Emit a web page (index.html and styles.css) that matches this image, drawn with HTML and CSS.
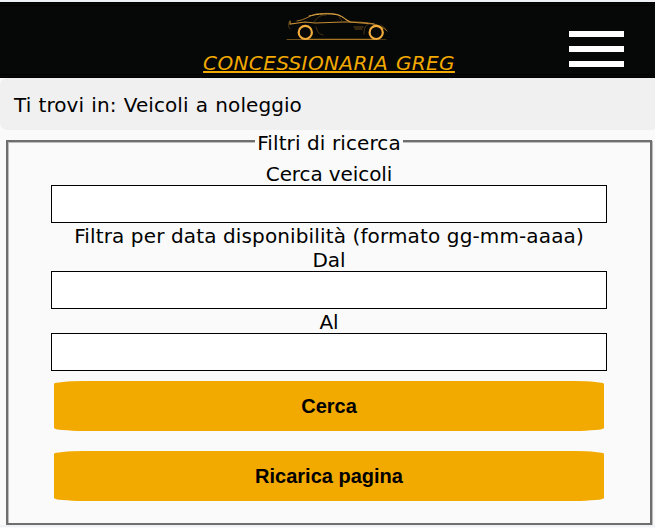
FILE: index.html
```html
<!DOCTYPE html>
<html lang="it">
<head>
<meta charset="utf-8">
<title>Concessionaria Greg</title>
<link rel="stylesheet" href="styles.css">
</head>
<body>
<header class="header">
  <div class="brand">
    <svg class="logo" viewBox="0 0 110 34" fill="none" stroke-linecap="round">
      <path d="M2 30.5H50" stroke="#715019" stroke-width="1"/>
      <path d="M20 30.4H92" stroke="#a87622" stroke-width="1.2"/>
      <path d="M90 30.5H101" stroke="#49350f" stroke-width="1"/>
      <path d="M12 12c8-1 12-5 19-7 10-1 20-1 25 2 4 2 5 4 10 6 12 0 24 1 30 5 3 1 5 3 6 4" stroke="#a97729" stroke-width="1"/>
      <path d="M24 7c7-2 22-3 29-1 6 2 7 5 12 7" stroke="#dda446" stroke-width="1"/>
      <path d="M5 12v3l15-2 10 1 28-1 6 0 25 2" stroke="#c48b34" stroke-width="1.2"/>
      <path d="M29 13c3-5 7-7 12-7M57 12l-3-4M4 13c-1 3-1 5 1 7M31 18c2 6 3 7 7 8M79 25c0-7 2-9 5-10M96 16l5 4" stroke="#644719" stroke-width=".7"/>
      <path d="M70 20h7m-8-2h9" stroke="#805a20" stroke-width=".8"/>
      <circle cx="20.3" cy="23.4" r="6.6" stroke="#f1ac3c" stroke-width="2.2"/>
      <circle cx="91.2" cy="23.4" r="6.6" stroke="#f1ac3c" stroke-width="2.2"/>
    </svg>
    <a class="name">CONCESSIONARIA GREG</a>
  </div>
  <div class="menu"><span></span><span></span><span></span></div>
</header>
<nav class="crumbs"><span class="crumb-text">Ti trovi in: Veicoli a noleggio</span></nav>
<form>
  <fieldset class="filters">
    <legend><span class="legend-text">Filtri di ricerca</span></legend>
    <label class="first" for="q">Cerca veicoli</label>
    <input id="q" type="text">
    <p>Filtra per data disponibilità (formato gg-mm-aaaa)</p>
    <label for="from">Dal</label>
    <input id="from" type="text">
    <label for="to">Al</label>
    <input id="to" type="text">
    <button type="button">Cerca</button>
    <button type="button">Ricarica pagina</button>
  </fieldset>
</form>
</body>
</html>
```
FILE: styles.css
```css
* { box-sizing: border-box; }
html { overflow: hidden; }
body {
  margin: 0;
  padding-top: 2px;
  background: linear-gradient(#eef2f5 2px, #fafafa 2px);
  color: #000;
  font: 20px/24px Verdana, "DejaVu Sans", sans-serif;
}
.header {
  position: relative;
  height: 76px;
  background: #060807;
  border-block: 4px double #000;
}
.brand {
  display: flex;
  flex-direction: column;
  align-items: center;
  padding-left: 3px;
}
.logo { width: 110px; height: 34px; margin: 3px 0 0 21px; flex: none; }
.name {
  margin-top: 8px;
  color: #f2a900;
  font-style: italic;
  letter-spacing: .37px;
  word-spacing: 1.2px;
  text-decoration: underline;
  text-decoration-thickness: 2px;
  text-underline-offset: 1px;
  white-space: nowrap;
}
.menu {
  position: absolute;
  top: 25px;
  right: 31px;
  width: 55px;
  display: grid;
  gap: 9px;
}
.menu span { height: 6px; background: #fff; }
.crumbs {
  height: 52px;
  padding: 15px 14px;
  border-radius: 7px 0 3px 7px;
  background: #f0f0f0;
  letter-spacing: .07px;
  word-spacing: .8px;
}
.filters {
  width: 645px;
  height: 395px;
  margin: 0 0 0 6px;
  padding: 9px 43px 0;
  border: 2px solid #6e6e6e;
  box-shadow: 1px 1px #bdbdbd, inset 1px 1px #bdbdbd;
  text-align: center;
}
legend {
  height: 22px;
  margin: 0 auto;
  padding: 1px 2px 0;
  background: #fafafa;
  letter-spacing: .1px;
}
label, p { display: block; height: 24px; margin: 0; padding-top: 1px; white-space: nowrap; }
.first { letter-spacing: -.1px; }
p { letter-spacing: .13px; }
input {
  display: block;
  width: 556px;
  height: 38px;
  margin: 0;
  border: 1px solid #000;
  background: #fff;
  font: inherit;
}
button {
  display: block;
  width: 550px;
  height: 50px;
  margin: 10px 3px 20px;
  padding: 0;
  border: 0;
  border-radius: 30px / 3px;
  background: #f2a900;
  color: #000;
  font: bold 20px/50px "Liberation Sans", Arial, sans-serif;
}
```
